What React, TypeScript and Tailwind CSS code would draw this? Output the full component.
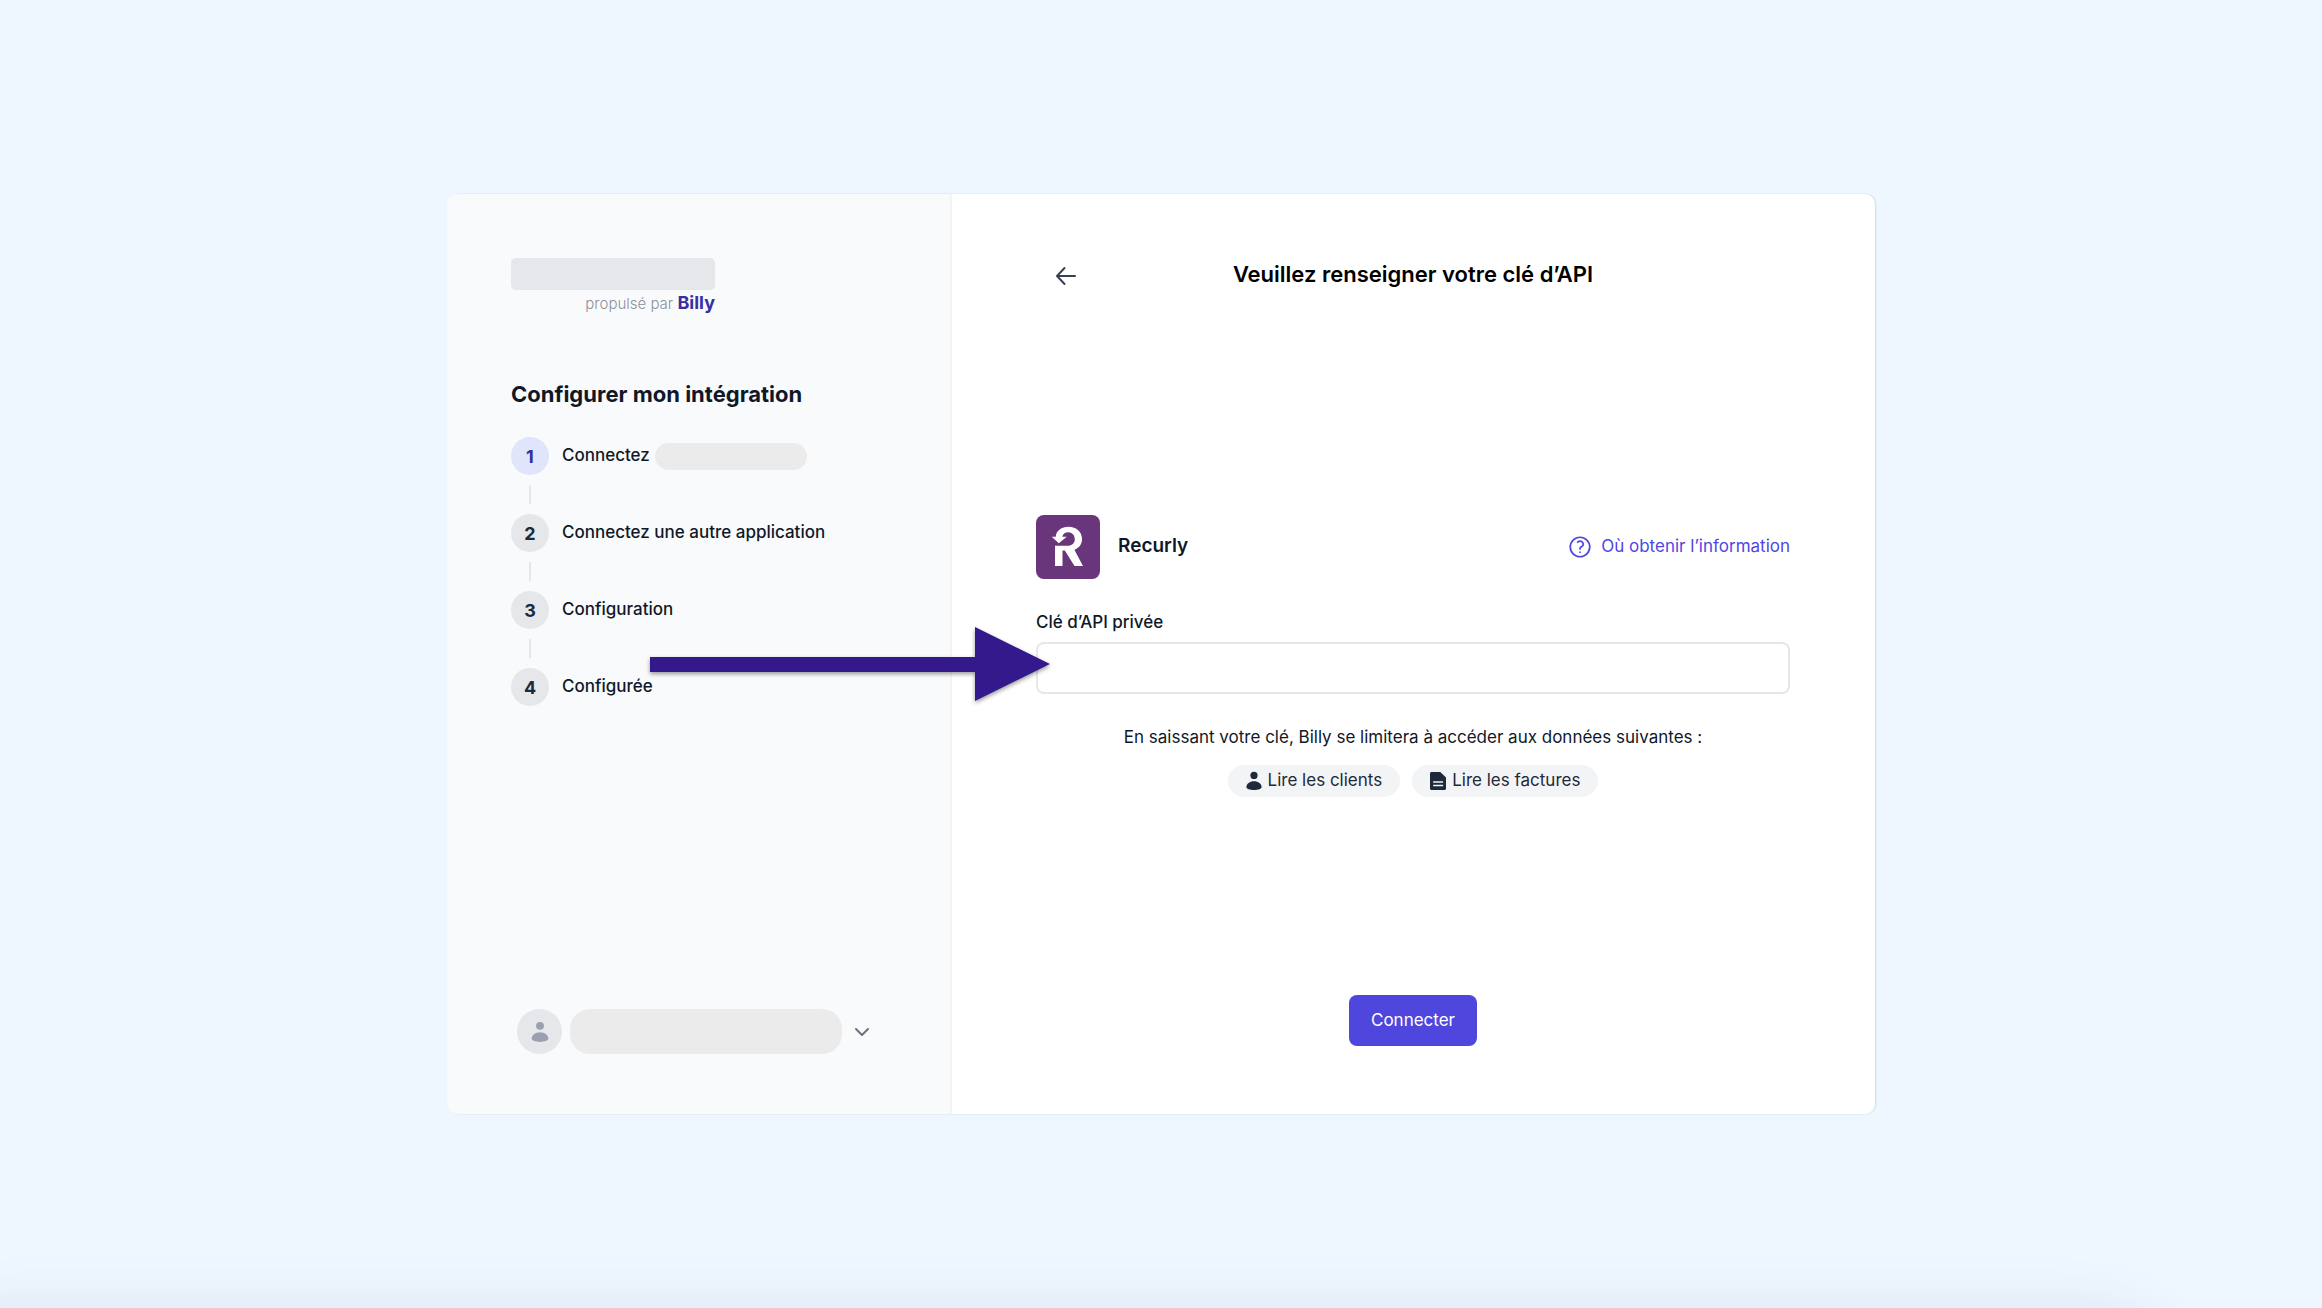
import { ChevronDown } from 'lucide-react';
import { useState } from 'react';
import clsx from 'clsx';

const steps = [
  { label: 'Connectez', redacted: true },
  { label: 'Connectez une autre application' },
  { label: 'Configuration' },
  { label: 'Configurée' },
];

function PersonIcon({ className }: { className?: string }) {
  return (
    <svg viewBox="0 0 16 20" className={className} fill="currentColor" aria-hidden="true">
      <circle cx="8" cy="4.4" r="3.6" />
      <path d="M8 10.2c4.2 0 7.6 2.7 7.6 5.8 0 1.8-3.4 3-7.6 3s-7.6-1.2-7.6-3c0-3.1 3.4-5.8 7.6-5.8Z" />
    </svg>
  );
}

function DocumentIcon({ className }: { className?: string }) {
  return (
    <svg viewBox="0 0 16 20" className={className} aria-hidden="true">
      <path d="M1.5 1h8.8L16 6.6v10.9c0 .8-.7 1.5-1.5 1.5h-13C.7 19 0 18.3 0 17.5v-15C0 1.7.7 1 1.5 1Z" fill="currentColor" />
      <path d="M3.6 11h9M3.6 14.5h9" stroke="#f3f4f6" strokeWidth="1.3" strokeLinecap="round" />
    </svg>
  );
}

function ArrowLeftIcon({ className }: { className?: string }) {
  return (
    <svg viewBox="0 0 24 24" className={className} fill="none" stroke="currentColor" strokeWidth="2" strokeLinecap="round" strokeLinejoin="round" aria-hidden="true">
      <path d="M10.5 20 3 12l7.5-8M3 12h18" />
    </svg>
  );
}

function QuestionIcon({ className }: { className?: string }) {
  return (
    <svg viewBox="0 0 24 24" className={className} fill="none" stroke="currentColor" strokeWidth="1.6" strokeLinecap="round" strokeLinejoin="round" aria-hidden="true">
      <circle cx="12" cy="12" r="9" />
      <path d="M9.879 7.519c1.171-1.025 3.071-1.025 4.242 0 1.172 1.025 1.172 2.687 0 3.712-.203.179-.43.326-.67.442-.745.361-1.45.999-1.45 1.827v.25M12 16.8h.01" />
    </svg>
  );
}

function RecurlyLogo() {
  return (
    <svg viewBox="0 0 64 64" className="size-16" aria-hidden="true">
      <rect width="64" height="64" rx="8" fill="#69357b" />
      <path
        fill="#fff"
        d="M15.7 21.8h4C20.2 15.5 25.5 11.7 32.5 11.7 40.5 11.7 46 16.7 46 24c0 5.2-2.9 9-7.600 10.700L47 51h-8.500L28.800 35.500H26.500V51H19V30.800h12.500c4.500 0 7.300-2.500 7.300-6.500 0-4-2.800-7-6.300-7-3.600 0-5.800 1.800-6.200 4.500h4.500L22.800 28.200Z"
      />
    </svg>
  );
}

function Sidebar() {
  return (
    <aside className="flex w-[505px] shrink-0 flex-col border-r-2 border-gray-100 bg-gray-50 px-16 pt-16 pb-[60px]">
      <div className="w-[204px]">
        <div className="h-8 rounded-[5px] bg-gray-200" />
        <p className="text-right text-[15px] leading-[26px] font-light text-[#8b919e]">
          propulsé par <span className="text-[18px] font-bold text-[#3730a3]">Billy</span>
        </p>
      </div>

      <h1 className="mt-[61px] text-[22px] leading-8 font-bold text-gray-900">Configurer mon intégration</h1>

      <ol className="mt-[27px] flex flex-col">
        {steps.map((step, i) => (
          <li key={step.label}>
            {i > 0 && <div className="my-[10px] ml-[18px] h-[19px] w-[2px] bg-gray-200" />}
            <div className="flex items-center gap-[13px]">
              <span
                className={clsx(
                  'flex size-[38px] items-center justify-center rounded-full text-[18px] font-bold',
                  i === 0 ? 'bg-[#e0e5fb] text-[#3730a3]' : 'bg-gray-200 text-gray-800',
                )}
              >
                {i + 1}
              </span>
              <span className="text-[17px] font-medium text-gray-900">{step.label}</span>
              {step.redacted && <span className="-ml-2 h-[27px] w-[152px] rounded-full bg-[#ebebeb]" />}
            </div>
          </li>
        ))}
      </ol>

      <button type="button" aria-label="Compte" className="mt-auto ml-[6px] flex items-center gap-2 self-start">
        <span className="flex size-[45px] items-center justify-center rounded-full bg-gray-200">
          <PersonIcon className="h-[22px] w-[18px] text-gray-400" />
        </span>
        <span className="h-[45px] w-[272px] rounded-[20px] bg-[#ebebeb]" />
        <ChevronDown className="size-6 text-gray-500" strokeWidth={2} />
      </button>
    </aside>
  );
}

export default function App() {
  const [apiKey, setApiKey] = useState('');

  return (
    <main className="relative flex min-h-screen items-center justify-center overflow-hidden bg-[#eef6ff] font-['Inter',sans-serif]">
      <div className="relative flex min-h-[920px] w-full max-w-[1428px] overflow-hidden rounded-[10px] bg-white shadow-[1px_0_2px_rgba(0,0,0,0.12)]">
        <Sidebar />

        <section className="flex flex-1 flex-col pt-[62px] pr-[85px] pb-[68px] pl-[84px]">
          <header className="grid grid-cols-[1fr_auto_1fr] items-center">
            <button type="button" aria-label="Retour" className="ml-[18px] justify-self-start pt-1 text-gray-700">
              <ArrowLeftIcon className="size-6" />
            </button>
            <h2 className="text-[22px] leading-9 font-semibold text-black">Veuillez renseigner votre clé d’API</h2>
          </header>

          <form id="api-key" className="flex flex-1 flex-col justify-center pt-6" onSubmit={(e) => e.preventDefault()}>
            <div className="flex items-center gap-[18px]">
              <RecurlyLogo />
              <h3 className="text-[19px] font-semibold text-gray-900">Recurly</h3>
              <a href="#aide" className="ml-auto flex items-center gap-2 text-[17px] text-[#4f46e5]">
                <QuestionIcon className="size-[26px]" />
                Où obtenir l’information
              </a>
            </div>

            <label htmlFor="key" className="mt-[31px] text-[17px] leading-6 font-medium text-gray-900">
              Clé d’API privée
            </label>
            <input
              id="key"
              type="text"
              value={apiKey}
              onChange={(e) => setApiKey(e.target.value)}
              className="mt-2 h-[52px] w-full rounded-lg border-2 border-gray-200 px-4 text-[17px] outline-none focus:border-indigo-500"
            />

            <p className="mt-[31px] text-center text-[17px] leading-6 text-gray-900">
              En saissant votre clé, Billy se limitera à accéder aux données suivantes :
            </p>
            <ul className="mt-4 flex justify-center gap-3 text-[17px] text-gray-800">
              <li className="flex h-8 items-center gap-[6px] rounded-full bg-gray-100 px-[18px]">
                <PersonIcon className="h-5 w-4" />
                Lire les clients
              </li>
              <li className="flex h-8 items-center gap-[6px] rounded-full bg-gray-100 px-[18px]">
                <DocumentIcon className="h-5 w-4" />
                Lire les factures
              </li>
            </ul>
          </form>

          <button type="submit" form="api-key" className="h-[51px] self-center rounded-lg bg-[#4f46dd] px-[22px] text-[17px] text-white">
            Connecter
          </button>
        </section>

        {/* pointer to the key field */}
        <svg viewBox="0 0 400 76" className="absolute top-[432px] left-[203px] w-[400px] overflow-visible drop-shadow-[0_2px_2px_rgba(0,0,0,0.4)]" aria-hidden="true">
          <path d="M0 31h325V1l75 37-75 37V46H0Z" fill="#33198b" />
        </svg>
      </div>

      <div className="pointer-events-none absolute -bottom-40 -left-10 h-40 w-[2220px] rounded-tr-[90px] shadow-[0_0_60px_rgba(60,50,70,0.09)]" />
    </main>
  );
}
